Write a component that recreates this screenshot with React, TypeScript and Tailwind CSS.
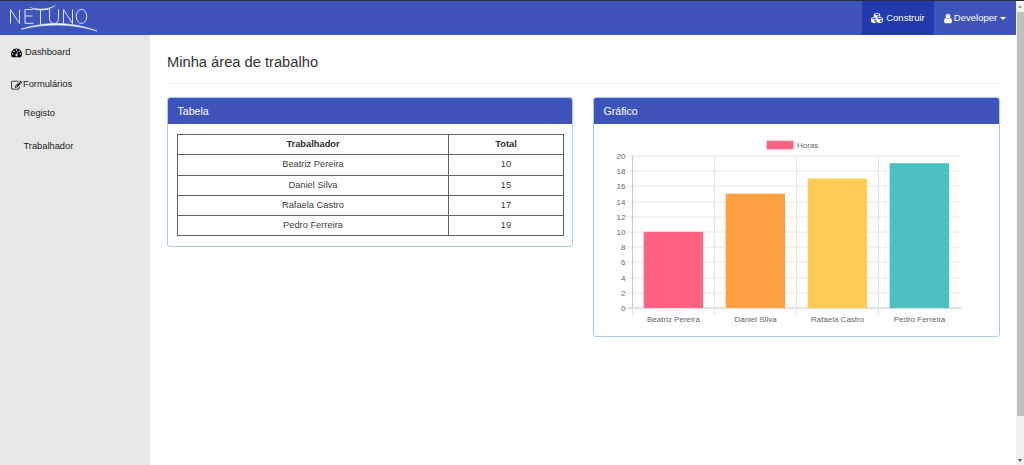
import { FaCubes } from "react-icons/fa";

const rows = [
  { name: "Beatriz Pereira", total: 10, color: "#ff6384" },
  { name: "Daniel Silva", total: 15, color: "#ff9f40" },
  { name: "Rafaela Castro", total: 17, color: "#ffcd56" },
  { name: "Pedro Ferreira", total: 19, color: "#4bc0c0" },
];

const ticks = [0, 2, 4, 6, 8, 10, 12, 14, 16, 18, 20];

function Logo() {
  return (
    <svg width="96" height="34" viewBox="0 0 96 34" fill="none" stroke="#dfe3f8" strokeWidth="1">
      <path d="M6.500 22.500V8.500L15.500 22.500V8.500" />
      <path d="M29 8.500H21V22.300H29.500M21 15H28.500" />
      <path d="M26 6.200C33 8.800 44 8.600 51.500 4.200C46 9.300 37 10.300 30 8.300Z" fill="#dfe3f8" strokeWidth="0.300" />
      <path d="M31 8.500H44M36.500 9V23.500" />
      <path d="M45.500 8V17.500C45.500 24.200 54.500 24.200 54.500 17.500V8.500" />
      <path d="M59.500 22.500V8.500L68.500 22.500V8.500" />
      <ellipse cx="77.500" cy="15.400" rx="5.300" ry="7" />
      <path d="M17 28.200C42 20.200 68 20.500 93 30C68 22.300 42 22.400 17 28.200Z" fill="#f2f4ff" strokeWidth="0.700" />
    </svg>
  );
}

function DashboardIcon() {
  return (
    <svg width="11" height="11" viewBox="0 0 1792 1792" fill="#000">
      <path d="M384 1152q0-53-37.5-90.5t-90.5-37.5-90.5 37.5-37.5 90.5 37.5 90.5 90.5 37.5 90.5-37.5 37.5-90.5zm192-448q0-53-37.5-90.5t-90.5-37.5-90.5 37.5-37.5 90.5 37.5 90.5 90.5 37.5 90.5-37.5 37.5-90.5zm428 481l101-382q6-26-7.5-48.5t-38.5-29.5-48 6.500-30 39.500l-101 382q-60 5-107 43.500t-63 98.500q-20 77 20 146t117 89 146-20 89-117q16-60-6-117t-72-91zm660-33q0-53-37.5-90.5t-90.5-37.5-90.5 37.5-37.5 90.5 37.5 90.5 90.5 37.5 90.5-37.5 37.5-90.5zm-640-640q0-53-37.5-90.5t-90.5-37.5-90.5 37.5-37.5 90.5 37.5 90.5 90.5 37.5 90.5-37.5 37.5-90.5zm448 192q0-53-37.5-90.5t-90.5-37.5-90.5 37.5-37.5 90.5 37.5 90.5 90.5 37.5 90.5-37.5 37.5-90.5zm320 448q0 261-141 483-19 29-54 29h-1402q-35 0-54-29-141-221-141-483 0-182 71-348t191-286 286-191 348-71 348 71 286 191 191 286 71 348z" />
    </svg>
  );
}

function EditIcon() {
  return (
    <svg width="11" height="11" viewBox="0 0 1792 1792" fill="#111">
      <path d="M888 1184l116-116-152-152-116 116v56h96v96h56zm440-720q-16-16-33 1l-350 350q-17 17-1 33t33-1l350-350q17-17 1-33zm80 594v190q0 119-84.5 203.5t-203.5 84.5h-832q-119 0-203.5-84.5t-84.5-203.5v-832q0-119 84.5-203.5t203.5-84.5h832q63 0 117 25 15 7 18 23 3 17-9 29l-49 49q-14 14-32 8-23-6-45-6h-832q-66 0-113 47t-47 113v832q0 66 47 113t113 47h832q66 0 113-47t47-113v-126q0-13 9-22l64-64q15-15 35-7t20 29zm-96-738l288 288-672 672h-288v-288zm444 132l-92 92-288-288 92-92q28-28 68-28t68 28l152 152q28 28 28 68t-28 68z" />
    </svg>
  );
}

function UserIcon() {
  return (
    <svg width="8" height="11" viewBox="0 0 1280 1792" fill="#fff">
      <path d="M1280 1399q0 109-62.5 187t-150.5 78h-854q-88 0-150.5-78t-62.5-187q0-85 8.5-160.5t31.5-152 58.5-131 94-89 134.5-34.5q131 128 313 128t313-128q76 0 134.5 34.5t94 89 58.5 131 31.5 152 8.5 160.5zm-256-887q0 159-112.5 271.5t-271.5 112.5-271.5-112.5-112.5-271.5 112.5-271.5 271.5-112.5 271.5 112.5 112.5 271.5z" />
    </svg>
  );
}

function Panel({ title, width, children }: { title: string; width: string; children: React.ReactNode }) {
  return (
    <section className={`${width} overflow-hidden rounded-[3px] border border-[#a5cdf2] bg-white`}>
      <h2 className="flex h-[26px] items-center bg-[#3f54ba] pl-[9.500px] pt-px text-[10.600px] text-white">{title}</h2>
      {children}
    </section>
  );
}

function BarChart() {
  return (
    <svg className="block" width="405" height="212" viewBox="594 124 405 212" fontSize="8" fill="#666">
      <rect x="766.500" y="140.800" width="27" height="8.500" fill="#ff6384" stroke="#efc4ce" strokeWidth="0.700" />
      <text x="797" y="147.700">Horas</text>
      {ticks.map((t) => {
        const y = Math.round(308 - t * 7.6) + 0.1;
        return (
          <g key={t}>
            <line x1="626" x2="961" y1={y} y2={y} stroke={t === 0 ? "#c6c6c6" : "#e7e7e7"} />
            <text x="625.500" y={y + 2.7} textAnchor="end">{t}</text>
          </g>
        );
      })}
      {rows.map((r, i) => (
        <g key={r.name}>
          <line x1={632.5 + i * 82} x2={632.5 + i * 82} y1="156" y2="308" stroke={i === 0 ? "#c9c9c9" : "#e5e5e5"} />
          <line x1={632.5 + i * 82} x2={632.5 + i * 82} y1="308" y2="315" stroke="#e5e5e5" />
          <rect x={643.7 + i * 82} y={308 - r.total * 7.62} width="59.300" height={r.total * 7.62} fill={r.color} />
          <text x={673.5 + i * 82} y="321.500" textAnchor="middle">{r.name}</text>
        </g>
      ))}
    </svg>
  );
}

export default function App() {
  return (
    <div className="flex h-[465px] w-[1024px] overflow-hidden bg-white font-['Liberation_Sans',Arial,sans-serif] text-[9.300px] text-[#222]">
      <div className="flex w-[1016px] flex-col">
        <header className="flex h-[35px] shrink-0 items-stretch border-t border-[#292b3d] bg-[#3f54ba] text-[9.500px] text-white">
          <div className="flex-1 pl-[4px]">
            <Logo />
          </div>
          <button className="flex w-[72px] items-center justify-center gap-[3px] bg-[#2238ad]">
            <FaCubes size={12} />
            <span>Construir</span>
          </button>
          <button className="flex w-[82px] items-center justify-center gap-[2px]">
            <UserIcon />
            <span>Developer</span>
            <span className="ml-px border-x-[3px] border-t-[3px] border-x-transparent border-t-white" />
          </button>
        </header>
        <div className="flex min-h-0 flex-1">
          <nav className="w-[150px] shrink-0 bg-[#e7e7e7] pt-px">
            <a className="flex h-[33px] items-center gap-[3px] pl-[11px]">
              <DashboardIcon />
              Dashboard
            </a>
            <a className="flex h-[32px] items-center gap-[1px] pl-[11px]">
              <EditIcon />
              Formulários
            </a>
            <a className="flex h-[26px] items-center pl-[23.500px]">Registo</a>
            <a className="flex h-[40px] items-center pl-[23.500px]">Trabalhador</a>
          </nav>
          <main className="flex-1 pl-[17px] pt-[16px]">
            <h1 className="h-[33px] w-[833px] border-b border-[#f0f0f0] text-[14.700px] leading-[22px] text-[#333]">
              Minha área de trabalho
            </h1>
            <div className="mt-[13px] flex items-start gap-[20px]">
              <Panel title="Tabela" width="w-[406px]">
                <div className="h-[122px] px-[9px] pt-[10px]">
                  <table className="w-[386px] table-fixed border-collapse text-center text-[#404040]">
                    <colgroup>
                      <col className="w-[271px]" />
                      <col className="w-[115px]" />
                    </colgroup>
                    <thead>
                      <tr className="h-[20px] text-[#303030]">
                        <th className="border border-[#606060] p-0">Trabalhador</th>
                        <th className="border border-[#606060] p-0">Total</th>
                      </tr>
                    </thead>
                    <tbody>
                      {rows.map((r) => (
                        <tr key={r.name} className="h-[20px] first:h-[21px]">
                          <td className="border border-[#606060] p-0">{r.name}</td>
                          <td className="border border-[#606060] p-0">{r.total}</td>
                        </tr>
                      ))}
                    </tbody>
                  </table>
                </div>
              </Panel>
              <Panel title="Gráfico" width="w-[407px]">
                <BarChart />
              </Panel>
            </div>
          </main>
        </div>
      </div>
      <div className="flex w-[8px] flex-col items-center bg-[#f1f1f1]">
        <div className="h-px w-full bg-[#292b2d]" />
        <div className="flex h-[11px] items-center">
          <span className="border-x-[2.500px] border-b-[3px] border-x-transparent border-b-[#a0a0a0]" />
        </div>
        <div className="ml-px h-[404px] w-[7px] bg-[#c1c1c1]" />
        <div className="flex flex-1 items-end pb-[3px]">
          <span className="border-x-[2.500px] border-t-[3px] border-x-transparent border-t-[#555]" />
        </div>
      </div>
    </div>
  );
}
